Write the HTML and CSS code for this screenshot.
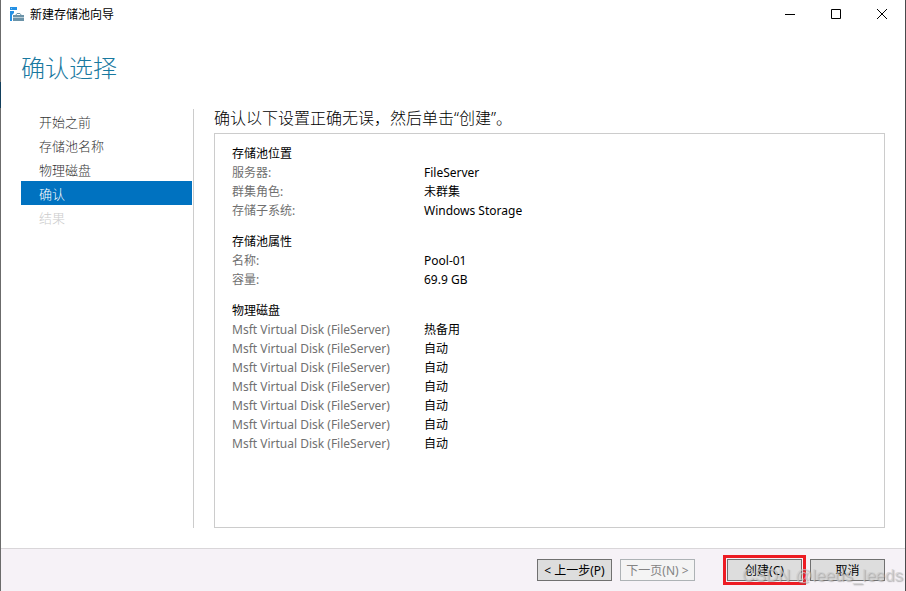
FILE: index.html
```html
<!DOCTYPE html>
<html lang="zh-CN">
<head>
<meta charset="utf-8">
<meta name="viewport" content="width=device-width, initial-scale=1">
<title>新建存储池向导</title>
<link rel="stylesheet" href="styles.css">
</head>
<body>
<div class="window">
  <header class="titlebar">
    <svg class="app-icon" width="15" height="14" viewBox="0 0 15 14" aria-hidden="true">
      <path fill="#2490e4" d="M1 0h7v3H1zM1 4h4v2L3 8v6H1z"/>
      <path fill="#8cc4f0" d="M2 1h1v1H2z"/>
      <path fill="none" stroke="#6b93a8" d="M6.500 8.500L8 6.500h3l1.500 2"/>
      <path fill="#6b93a8" d="M4 8h11v2H4zM4 11h11v3H4z"/>
      <path fill="#b9ccd6" d="M4 10h11v1H4z"/>
    </svg>
    <span class="caption">新建存储池向导</span>
    <div class="window-controls">
      <button class="control" type="button" aria-label="最小化"><svg width="12" height="12" viewBox="0 0 12 12"><path d="M1 6.500h10"/></svg></button>
      <button class="control" type="button" aria-label="最大化"><svg width="12" height="12" viewBox="0 0 12 12"><path d="M1.500 1.500h9v9h-9z"/></svg></button>
      <button class="control" type="button" aria-label="关闭"><svg width="12" height="12" viewBox="0 0 12 12"><path d="M1 1l10 10M11 1L1 11"/></svg></button>
    </div>
  </header>
  <h1 class="page-title">确认选择</h1>
  <div class="body">
    <nav class="steps">
      <a class="step" href="#">开始之前</a>
      <a class="step" href="#">存储池名称</a>
      <a class="step" href="#">物理磁盘</a>
      <a class="step current" href="#" aria-current="step">确认</a>
      <a class="step disabled" aria-disabled="true">结果</a>
    </nav>
    <main class="content">
      <p class="prompt">确认以下设置正确无误，然后单击“创建”。</p>
      <div class="summary">
        <table>
          <caption>存储池位置</caption>
          <tr><th scope="row">服务器:</th><td>FileServer</td></tr>
          <tr><th scope="row">群集角色:</th><td>未群集</td></tr>
          <tr><th scope="row">存储子系统:</th><td>Windows Storage</td></tr>
        </table>
        <table>
          <caption>存储池属性</caption>
          <tr><th scope="row">名称:</th><td>Pool-01</td></tr>
          <tr><th scope="row">容量:</th><td>69.9 GB</td></tr>
        </table>
        <table>
          <caption>物理磁盘</caption>
          <tr><th scope="row">Msft Virtual Disk (FileServer)</th><td>热备用</td></tr>
          <tr><th scope="row">Msft Virtual Disk (FileServer)</th><td>自动</td></tr>
          <tr><th scope="row">Msft Virtual Disk (FileServer)</th><td>自动</td></tr>
          <tr><th scope="row">Msft Virtual Disk (FileServer)</th><td>自动</td></tr>
          <tr><th scope="row">Msft Virtual Disk (FileServer)</th><td>自动</td></tr>
          <tr><th scope="row">Msft Virtual Disk (FileServer)</th><td>自动</td></tr>
          <tr><th scope="row">Msft Virtual Disk (FileServer)</th><td>自动</td></tr>
        </table>
      </div>
    </main>
  </div>
  <footer class="actions">
    <button class="btn" type="button">&lt; 上一步(P)</button>
    <button class="btn" type="button" disabled>下一页(N) &gt;</button>
    <button class="btn create" type="button">创建(C)</button>
    <button class="btn" type="button">取消</button>
    <span class="watermark">CSDN @leeds_leeds</span>
  </footer>
</div>
</body>
</html>
```
FILE: styles.css
```css
* {
  box-sizing: border-box;
}

body {
  margin: 0;
  font: 12px/19px "Noto Sans", "Noto Sans CJK SC", sans-serif;
  color: #000;
  background: #fff;
}

.window {
  display: flex;
  flex-direction: column;
  min-height: 100vh;
  padding: 0 1px;
  background:
    linear-gradient(#6b6b6b 82px, #123f5c 82px, #123f5c 108px, #6b6b6b 108px) left / 1px 100% no-repeat,
    linear-gradient(#4a4a4c, #4a4a4c) right / 1px 100% no-repeat,
    #fff;
}

.titlebar {
  display: flex;
  align-items: center;
  height: 28px;
  padding-left: 8px;
}

.caption {
  margin-left: 6px;
}

.window-controls {
  display: flex;
  margin-left: auto;
}

.control {
  display: flex;
  align-items: center;
  justify-content: center;
  width: 46px;
  height: 28px;
  padding: 0;
  border: 0;
  background: none;
}

.control path {
  fill: none;
  stroke: #000;
}

.page-title {
  margin: 22px 20px 0;
  color: #1979a0;
  font-size: 24px;
  font-weight: 300;
  line-height: 36px;
}

.body {
  display: flex;
  flex: 1;
  margin: 23px 20px 20px;
}

.steps {
  width: 173px;
  padding-right: 1px;
  border-right: 1px solid #ccc;
}

.step {
  display: block;
  padding: 2px 0 0 18px;
  color: #333;
  font-size: 13px;
  font-weight: 300;
  line-height: 22px;
  text-decoration: none;
}

.step.current {
  background: #0072c0;
  color: #fff;
}

.step.disabled {
  color: #ccc;
}

.content {
  display: flex;
  flex: 1;
  flex-direction: column;
  margin-left: 20px;
}

.prompt {
  margin: 0 0 6px;
  font-size: 16px;
  font-weight: 300;
  line-height: 18px;
}

.summary {
  flex: 1;
  padding: 10px 17px;
  border: 1px solid #ccc;
}

table {
  width: 100%;
  margin-bottom: 12px;
  border-collapse: collapse;
  table-layout: fixed;
}

caption {
  text-align: left;
}

th,
td {
  padding: 0;
  font-weight: 400;
  text-align: left;
}

th {
  width: 192px;
  color: #707070;
}

.actions {
  position: relative;
  display: flex;
  align-items: flex-start;
  justify-content: flex-end;
  gap: 8px;
  height: 43px;
  padding: 10px 20px 0;
  border-top: 1px solid #d9d6d9;
  background: #f6f2f7;
}

.btn {
  width: 75px;
  height: 22px;
  padding: 2px 0 0;
  border: 1px solid #707070;
  background: #ddd;
  color: #000;
  font: inherit;
  line-height: 18px;
  white-space: nowrap;
}

.btn:disabled {
  border-color: #adb2b5;
  background: #f4f4f4;
  color: #838383;
}

.create {
  margin-left: 24px;
  outline: 3px solid #ed1c24;
  outline-offset: 1px;
}

.watermark {
  position: absolute;
  right: 2px;
  bottom: 4px;
  color: rgba(205, 205, 205, 0.7);
  font: 17px/22px "Liberation Sans", sans-serif;
  text-shadow: 1px 1px 1px rgba(120, 120, 120, 0.5);
  pointer-events: none;
}
```
